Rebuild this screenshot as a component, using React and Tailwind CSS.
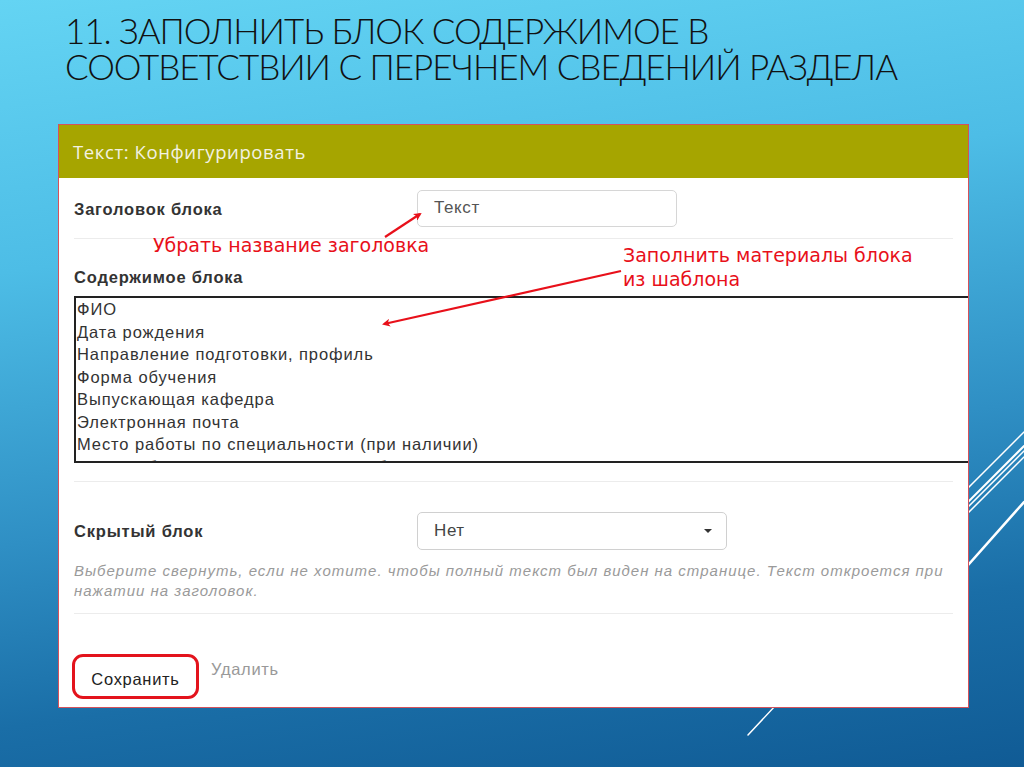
import React from 'react';

const contentLines = [
  'ФИО',
  'Дата рождения',
  'Направление подготовки, профиль',
  'Форма обучения',
  'Выпускающая кафедра',
  'Электронная почта',
  'Место работы по специальности (при наличии)',
  'Опыт работы по специальности с обучением (при наличии)',
];

function Decorations() {
  // thin white stripes of the slide template
  return (
    <svg className="absolute inset-0 pointer-events-none" width="1024" height="767" viewBox="0 0 1024 767">
      <g stroke="#ffffff" strokeLinecap="round">
        <line x1="930" y1="526" x2="1024" y2="432" strokeWidth="1.5" />
        <line x1="930" y1="540" x2="1024" y2="446" strokeWidth="2" />
        <line x1="930" y1="545" x2="1024" y2="451" strokeWidth="1.5" />
        <line x1="930" y1="551" x2="1024" y2="457" strokeWidth="1.5" />
        <line x1="930" y1="608" x2="1024" y2="502" strokeWidth="2.5" />
        <line x1="748" y1="735" x2="790" y2="690" strokeWidth="1.5" />
      </g>
    </svg>
  );
}

function Arrows() {
  return (
    <svg className="absolute inset-0 pointer-events-none" width="1024" height="767" viewBox="0 0 1024 767">
      <defs>
        <marker id="head" markerWidth="8" markerHeight="8" refX="6" refY="4" orient="auto" markerUnits="userSpaceOnUse">
          <path d="M0,0 L8,4 L0,8 L2,4 Z" fill="#e8101a" />
        </marker>
      </defs>
      <g stroke="#e8101a" strokeWidth="2.2" fill="none">
        <line x1="385" y1="237" x2="420" y2="214" markerEnd="url(#head)" />
        <line x1="621" y1="271" x2="384" y2="324" markerEnd="url(#head)" />
      </g>
    </svg>
  );
}

export default function App() {
  return (
    <div className="relative w-[1024px] h-[767px] overflow-hidden bg-[linear-gradient(172deg,#64d4f3_0%,#4dbde6_30%,#2f8fc4_60%,#1a6ea7_80%,#105b95_100%)] font-['Liberation_Sans',Arial,sans-serif]">
      <Decorations />

      {/* slide title */}
      <div className="relative pl-[65px] pt-[12px] text-[35px] leading-[36px] font-light uppercase tracking-[-0.03em] text-[#111] font-['Lato','Open_Sans',sans-serif]">
        <p>11. Заполнить блок содержимое в</p>
        <p>соответствии с перечнем сведений раздела</p>
      </div>

      {/* configure panel */}
      <div className="relative ml-[58px] mt-[40px] w-[911px] h-[584px] overflow-hidden bg-white border border-[#d4525c]">
        <div className="h-[53px] bg-[#a6a500] flex items-center px-[14px]">
          <span className="text-[18.5px] tracking-[0.6px] text-[#f3f2e2] font-['Open_Sans',sans-serif]">Текст: Конфигурировать</span>
        </div>

        <div className="px-[15px]">
          <div className="flex items-center h-[61px] border-b border-[#ececec]">
            <span className="w-[343px] pt-[2px] text-[16.5px] tracking-[0.8px] font-bold text-[#333]">Заголовок блока</span>
            <div className="w-[260px] h-[37px] rounded-[5px] border border-[#d6d6d6] flex items-center px-[16px] text-[17px] tracking-[0.6px] text-[#555]">
              Текст
            </div>
          </div>

          <p className="mt-[28px] text-[16.5px] tracking-[0.8px] leading-[20px] font-bold text-[#333]">Содержимое блока</p>
          <div className="mt-[9px] w-[940px] h-[167px] border-2 border-[#222] overflow-hidden pl-[1px]">
            {contentLines.map(line => (
              <p key={line} className="text-[16.5px] tracking-[0.9px] leading-[22.5px] text-[#333] whitespace-nowrap">{line}</p>
            ))}
          </div>

          <div className="h-[19px] border-b border-[#ececec]" />

          <div className="flex items-center h-[95px] pt-[3px]">
            <span className="w-[343px] text-[16.5px] tracking-[0.8px] font-bold text-[#333]">Скрытый блок</span>
            <div className="w-[310px] h-[38px] rounded-[5px] border border-[#d0d0d0] flex items-center justify-between pl-[16px] pr-[14px] text-[17px] tracking-[0.6px] text-[#444]">
              <span>Нет</span>
              <span className="w-0 h-0 border-l-[4px] border-r-[4px] border-t-[4px] border-l-transparent border-r-transparent border-t-[#333]" />
            </div>
          </div>

          <div className="-mt-[16px] pb-[12px] border-b border-[#ececec] text-[15px] tracking-[1px] leading-[20px] italic text-[#9a9a9a] whitespace-nowrap">
            Выберите свернуть, если не хотите. чтобы полный текст был виден на странице. Текст откроется при
            <br />
            нажатии на заголовок.
          </div>

          <div className="flex items-start gap-[12px] pt-[40px] -ml-[2px]">
            <button className="w-[127px] h-[45px] rounded-[11px] border-[3px] border-[#e3131c] pt-[5px] text-[16.5px] tracking-[0.7px] text-[#222]">
              Сохранить
            </button>
            <span className="pt-[3px] text-[16.5px] tracking-[0.7px] text-[#999]">Удалить</span>
          </div>
        </div>
      </div>

      {/* annotations */}
      <p className="absolute left-[153px] top-[233px] text-[19px] leading-[24px] text-[#e8101a] font-['DejaVu_Sans',sans-serif]">
        Убрать название заголовка
      </p>
      <p className="absolute left-[623px] top-[243px] text-[19px] leading-[24px] text-[#e8101a] font-['DejaVu_Sans',sans-serif]">
        Заполнить материалы блока
        <br />
        из шаблона
      </p>
      <Arrows />
    </div>
  );
}
